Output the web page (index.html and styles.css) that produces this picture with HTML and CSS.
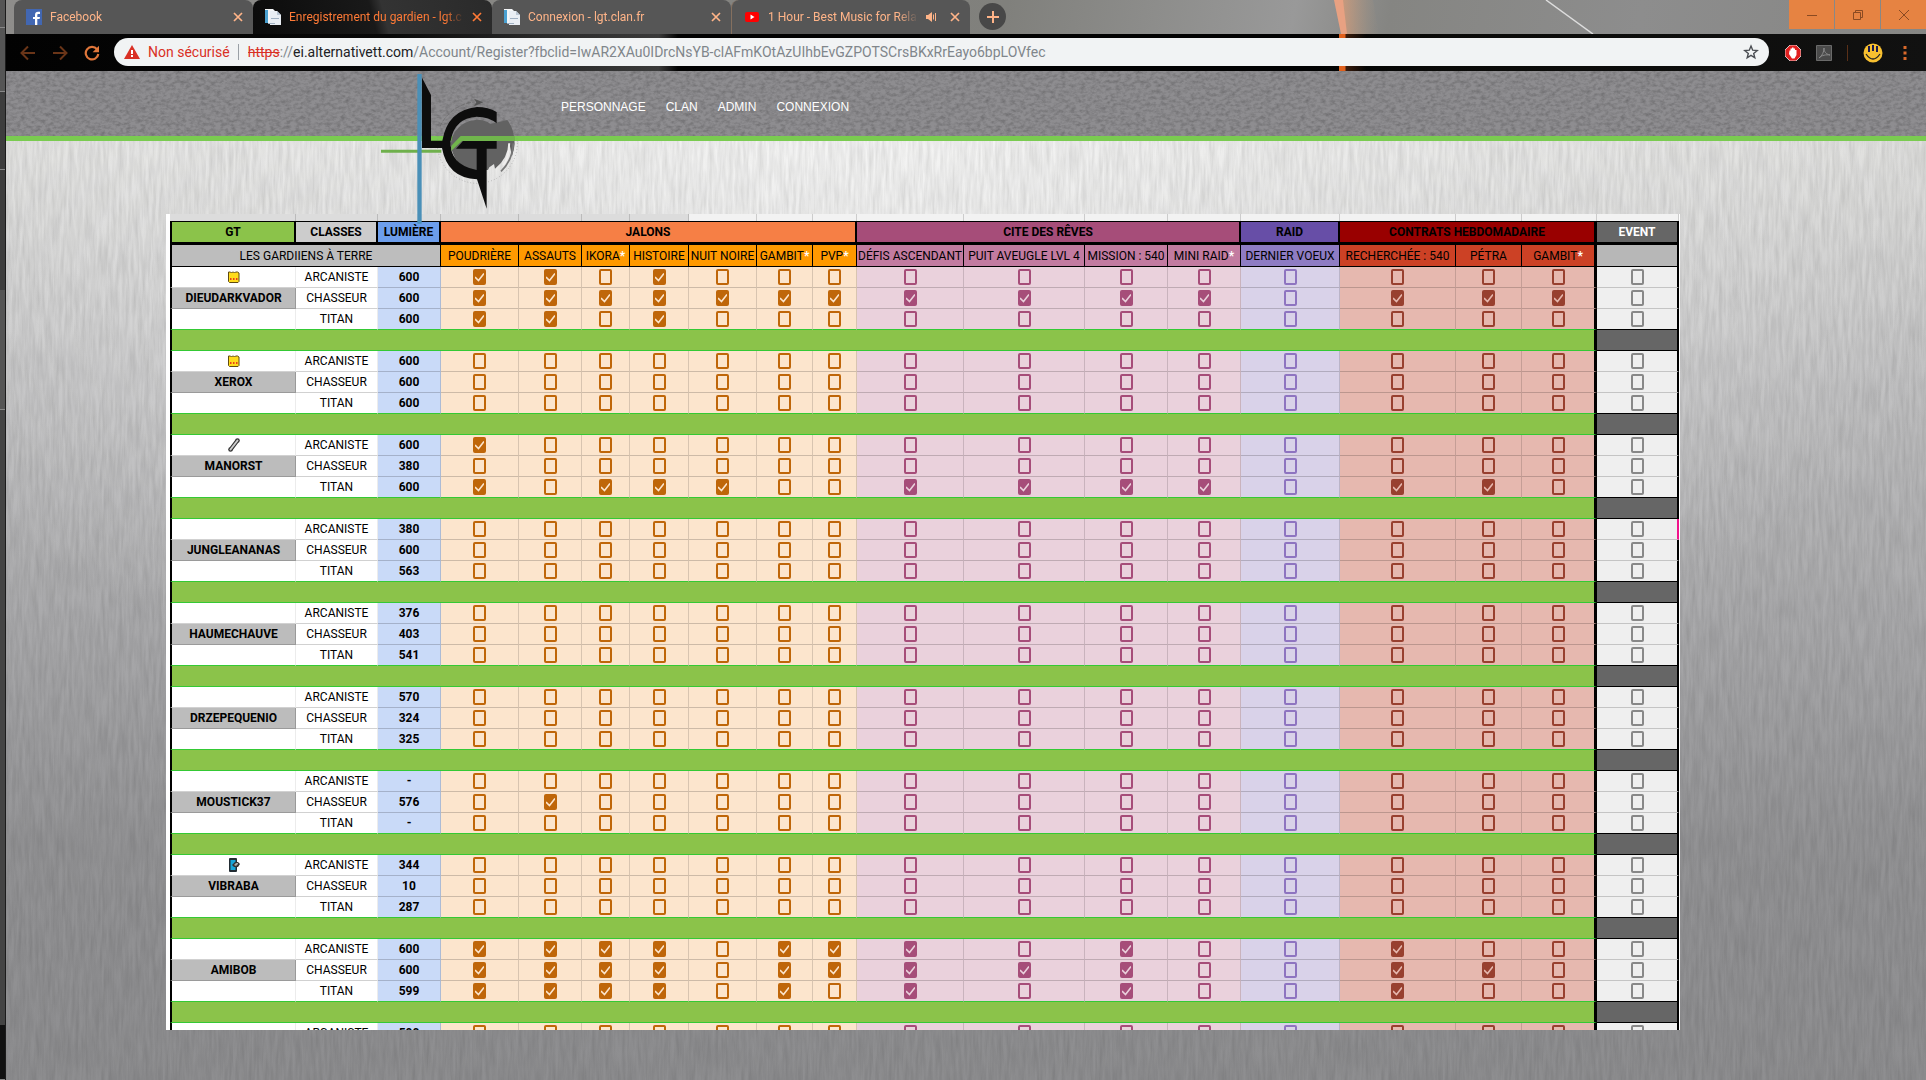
FILE: index.html
```html
<!DOCTYPE html>
<html lang="fr">
<head>
<meta charset="utf-8">
<title>Enregistrement du gardien - lgt.clan.fr</title>
<link rel="stylesheet" href="styles.css">
</head>
<body>
<svg class="defs" aria-hidden="true">
  <symbol id="close" viewBox="0 0 10 10"><path d="M1 1 9 9M9 1 1 9" fill="none" stroke="currentColor" stroke-width="1.7"/></symbol>
  <symbol id="doc" viewBox="0 0 16 16"><path d="M0 0h8l2 2v12H0z" fill="#f4f6f8"/><path d="M0 1h3v13H0z" fill="#4aa0d0"/><path d="M5 2h7l4 4v10H5z" fill="#e9eef4"/><path d="M12 2v4h4z" fill="#b9c6d4"/><path d="M6 9h8v1H6zM3 14h7v1H3z" fill="#9fb0c2"/></symbol>
  <symbol id="bubble" viewBox="0 0 12 12"><path d="M.5 1h2l1 1 1-1h1l1 1 1-1h2l1.500 1v8.500l-1 1H1.500l-1-1z" fill="#ffdc1c" stroke="#5f4a10"/><path d="M2 7h1.500v2H2zM5 7h1.500v2H5zM8 7h1.500v2H8z" fill="#e8401c"/></symbol>
  <symbol id="bone" viewBox="0 0 12 14"><path d="M3 11 9 3" stroke="#333" stroke-width="4" stroke-linecap="round"/><circle cx="9.500" cy="2.500" r="2.300" fill="#333"/><circle cx="2.500" cy="11.500" r="2.300" fill="#333"/><path d="M2.500 11.500 9.500 2.500" stroke="#ccc" stroke-width="2" stroke-linecap="round"/></symbol>
  <symbol id="phone" viewBox="0 0 12 14"><rect x="1" width="8" height="14" rx="1" fill="#222c33"/><path d="M2.500 2h5v10h-5z" fill="#18a5d8"/><path d="M4 7l3-3h3l2 2-2 3H6z" fill="#333"/><path d="M6 7l2-2h2v1L8 8z" fill="#aaa"/></symbol>
</svg>

<div class="behind" aria-hidden="true"><i></i><i></i><i></i><i></i><i></i></div>

<div class="window">
  <header class="tabstrip">
    <nav class="tabs" aria-label="Onglets">
      <div class="tab"><svg class="fav" viewBox="0 0 16 16"><path d="M0 0h16v16H0z" fill="#4267b2"/><path d="M9 16V10H7V8h2V6c0-2.200 1.200-3.200 3-3.200h2V5h-1.500C11.600 5 11.300 5.400 11.300 6.200V8H14l-.4 2h-2.300v6z" fill="#fff"/></svg><span>Facebook</span><button aria-label="Fermer"><svg><use href="#close"/></svg></button></div>
      <div class="tab active"><svg class="fav"><use href="#doc"/></svg><span>Enregistrement du gardien - lgt.c</span><button aria-label="Fermer"><svg><use href="#close"/></svg></button></div>
      <div class="tab"><svg class="fav"><use href="#doc"/></svg><span>Connexion - lgt.clan.fr</span><button aria-label="Fermer"><svg><use href="#close"/></svg></button></div>
      <div class="tab split"><svg class="fav" viewBox="0 0 16 16"><rect x="1" y="3" width="14" height="10" rx="2" fill="#f00"/><path d="M6.500 5.500v5l4-2.500z" fill="#fff"/></svg><span>1 Hour - Best Music for Relax</span><svg class="sound" viewBox="0 0 12 12"><path d="M0 4h2l4-3v10L2 8H0z" fill="currentColor"/><path d="M7.500 3.500v5M9.500 2v8" stroke="currentColor" fill="none"/></svg><button aria-label="Fermer"><svg><use href="#close"/></svg></button></div>
    </nav>
    <button class="newtab" aria-label="Nouvel onglet"><svg viewBox="0 0 12 12"><path d="M6 0v12M0 6h12" stroke="currentColor" stroke-width="2"/></svg></button>
    <svg class="wallpaper" viewBox="0 0 330 34" aria-hidden="true"><defs><linearGradient id="glow"><stop offset="0" stop-color="#f0a070" stop-opacity=".7"/><stop offset="1" stop-color="#b09a80" stop-opacity="0"/></linearGradient></defs><path d="M24 0h35l6 34H32z" fill="url(#glow)"/><path d="M20 0h9l4 34h-6z" fill="#e8a182"/><path d="M232 0l47 34" stroke="#ddd" stroke-width="1.500"/></svg>
    <div class="winbtns">
      <button aria-label="Réduire"><svg viewBox="0 0 12 12"><path d="M1 6.500h10" stroke="currentColor"/></svg></button>
      <button aria-label="Restaurer"><svg viewBox="0 0 12 12"><path d="M1.500 3.500h7v7h-7zM3.500 3V1.500h7v7H9" fill="none" stroke="currentColor"/></svg></button>
      <button aria-label="Fermer la fenêtre"><svg viewBox="0 0 12 12"><path d="M1 1l10 10M11 1 1 11" stroke="currentColor"/></svg></button>
    </div>
  </header>

  <div class="toolbar">
    <button class="dim" aria-label="Précédent"><svg viewBox="0 0 16 16"><path d="M15 8H2M8 1.500 1.500 8 8 14.500" fill="none" stroke="currentColor" stroke-width="2"/></svg></button>
    <button class="dim" aria-label="Suivant"><svg viewBox="0 0 16 16"><path d="M1 8h13M8 1.500 14.500 8 8 14.500" fill="none" stroke="currentColor" stroke-width="2"/></svg></button>
    <button aria-label="Actualiser"><svg viewBox="0 0 16 16"><path d="M13 4.200A6.300 6.300 0 1 0 14.300 9" fill="none" stroke="currentColor" stroke-width="2.200"/><path d="M15 .8v6.400H8.600z" fill="currentColor"/></svg></button>
    <div class="address">
      <svg class="warn" viewBox="0 0 16 14"><path d="M8 0l8 14H0z" fill="#d93025"/><path d="M7 5h2v4H7zM7 10h2v2H7z" fill="#fff"/></svg>
      <span class="unsafe">Non sécurisé</span>
      <span class="url"><s>https</s>://<b>ei.alternativett.com</b>/Account/Register?fbclid=IwAR2XAu0IDrcNsYB-clAFmKOtAzUIhbEvGZPOTSCrsBKxRrEayo6bpLOVfec</span>
      <svg class="star" viewBox="0 0 16 16"><path d="M8 2l1.700 4.200 4.500.3-3.500 2.900 1.100 4.400L8 11.400l-3.800 2.400 1.100-4.400-3.500-2.900 4.500-.3z" fill="none" stroke="#4a4d52" stroke-width="1.400"/></svg>
    </div>
    <div class="exts">
      <svg viewBox="0 0 16 16"><path d="M5 0h6l5 5v6l-5 5H5l-5-5V5z" fill="#e02020" stroke="#eee" stroke-width=".8"/><path d="M4.500 5.500h1V3.500h1.500V2.500h1.500v1H10V5h1.500v5l-2 3.500H7L4 9z" fill="#fff"/></svg>
      <svg viewBox="0 0 16 16"><path d="M.5.500h15v15H.5z" fill="#4a4a4a" stroke="#6a6a6a"/><path d="M3 13c3-2 5-6 5-10 0 4 2 6 6 7-4-.5-8 0-11 3z" fill="none" stroke="#8a8a8a"/></svg>
      <i></i>
      <svg class="smile" viewBox="0 0 20 20"><circle cx="10" cy="10" r="9.500" fill="#f8c030"/><path d="M6 3v6M10 2v6M14 3v6" stroke="#1a1a50" stroke-width="2"/><path d="M3 11q7 10 14 0" fill="none" stroke="#222" stroke-width="1.300"/></svg>
      <svg class="dots" viewBox="0 0 4 16"><path d="M.5 1h3v3h-3zM.5 6.500h3v3h-3zM.5 12h3v3h-3z" fill="#d9692b"/></svg>
    </div>
  </div>

  <div class="banner">
    <svg class="logo" viewBox="60 33 420 465" role="img" aria-label="LGT">
      <circle cx="352" cy="250" r="120" fill="none" stroke="#888" stroke-width="2" stroke-dasharray="2 7"/>
      <path d="M240 200a124 124 0 0 1 105-74" fill="none" stroke="#666" stroke-width="2" stroke-dasharray="14 4"/>
      <path d="M342 116l28 11-28 12 7-12z" fill="#555"/>
      <path d="M272 250a80 80 0 0 1 111-64l8 6 51-12q22 28 22 72-2 20-8 36l-6-28-5-12q0 46-40 78l-3-14-14 10-4 8H340q-62-12-68-80z" fill="#626262"/>
      <path d="M448 250q0 40-18 66" fill="none" stroke="#f0efee" stroke-width="5"/>
      <path d="M460 250q-3 52-37 84" fill="none" stroke="#777" stroke-width="5"/>
      <path d="M186 53l27 52v137h34q16-92 104-101 34 0 59 15v34q-22-19-60-20-66 4-78 72-4 72 78 88V266h-62l21-23h101v23h-30v180l-29-88Q262 354 246 264h-60z" fill="#0d0d0d"/>
      <path d="M63 269h181v9H63z" fill="#6fb04c"/>
      <path d="M464 228H302l-28 29v15l32-29h158z" fill="#70b54c"/>
      <path d="M172 42h13v449h-13z" fill="#4a90b8"/>
    </svg>
    <nav class="menu" aria-label="Menu">
      <a href="#personnage">PERSONNAGE</a><a href="#clan">CLAN</a><a href="#admin">ADMIN</a><a href="#connexion">CONNEXION</a>
    </nav>
  </div>

  <main>
    <div class="sheet">
      <table>
        <colgroup><col style="width:126px"><col style="width:82px"><col style="width:63px"><col style="width:78px"><col style="width:63px"><col style="width:48px"><col style="width:59px"><col style="width:68px"><col style="width:56px"><col style="width:44px"><col style="width:107px"><col style="width:121px"><col style="width:83px"><col style="width:73px"><col style="width:99px"><col style="width:116px"><col style="width:66px"><col style="width:75px"><col style="width:82px"></colgroup>
        <thead>
          <tr class="ruler" aria-hidden="true"><td></td><td></td><td></td><td></td><td></td><td></td><td></td><td></td><td></td><td></td><td></td><td></td><td></td><td></td><td></td><td></td><td></td><td></td><td></td></tr>
          <tr class="groups"><th class="gt">GT</th><th class="cls">CLASSES</th><th class="lum">LUMIÈRE</th><th class="jalons" colspan="7">JALONS</th><th class="cite" colspan="4">CITE DES RÊVES</th><th class="raid">RAID</th><th class="contrats" colspan="3">CONTRATS HEBDOMADAIRE</th><th class="event">EVENT</th></tr>
          <tr class="names"><th class="team" colspan="3">LES GARDIIENS À TERRE</th><th class="jalons">POUDRIÈRE</th><th class="jalons">ASSAUTS</th><th class="jalons">IKORA<b>*</b></th><th class="jalons">HISTOIRE</th><th class="jalons">NUIT NOIRE</th><th class="jalons">GAMBIT<b>*</b></th><th class="jalons">PVP<b>*</b></th><th class="cite">DÉFIS ASCENDANT</th><th class="cite">PUIT AVEUGLE LVL 4</th><th class="cite">MISSION : 540</th><th class="cite">MINI RAID<b>*</b></th><th class="raid">DERNIER VOEUX</th><th class="contrats">RECHERCHÉE : 540</th><th class="contrats">PÉTRA</th><th class="contrats wall">GAMBIT<b>*</b></th><th class="event"></th></tr>
        </thead>
        <tbody id="rows"></tbody>
      </table>
    </div>
  </main>
</div>
<script src="script.js"></script>
</body>
</html>
```
FILE: styles.css
```css
* { box-sizing: border-box; }
body {
  margin: 0;
  height: 100vh;
  display: grid;
  grid-template-columns: 6px 1fr;
  overflow: hidden;
  font-family: "Liberation Sans", Arial, sans-serif;
}
button { border: 0; padding: 0; background: none; color: inherit; display: flex; align-items: center; justify-content: center; }
svg { display: block; }
.defs { position: absolute; width: 0; height: 0; }

/* edge of the window behind the browser */
.behind { background: #444; border-right: 1px solid #1c1c1c; display: grid; grid-template-rows: 28px 64px 78px 240px 1fr; }
.behind i { border-bottom: 1px solid #888; background: #555; }
.behind i:nth-child(3) { background: #3d3d3d; }
.behind i:nth-child(4) { background: linear-gradient(#3d3d3d 50%, #555 50%); }
.behind i:nth-child(5) { background: linear-gradient(#444 92%, #111 92%); }

.window { display: flex; flex-direction: column; min-width: 0; height: 100vh; }

/* tab strip */
.tabstrip {
  height: 34px; flex: none; display: flex; align-items: flex-start; padding-left: 8px;
  background: linear-gradient(100deg, #8e8d8b 0, #80807c 52%, #999 67%, #858582 72%, #8d8d8d 85%, #868684 100%);
  font: 12px/28px Roboto, "Open Sans", sans-serif; color: #ffb488;
}
.tabs { display: flex; height: 34px; }
.tab { width: 239px; height: 34px; padding: 0 10px 0 12px; display: flex; align-items: center; gap: 8px; background: #565656; border-radius: 8px 8px 0 0; }
.tab.active { color: #ff7a36; background: linear-gradient(75deg, #0b0b0b, #191919 50%, #333 55%, #2a2a2a); }
.tab.split { border-left: 1px solid #85705f; }
.tab span { flex: 1; overflow: hidden; white-space: nowrap; mask-image: linear-gradient(90deg, #000 calc(100% - 20px), transparent); }
.tab button, .tab button svg { width: 10px; height: 10px; }
.fav { width: 16px; height: 16px; flex: none; }
.sound { width: 12px; height: 12px; margin-right: 4px; flex: none; }
.newtab { width: 27px; height: 27px; margin: 3px 0 0 9px; border-radius: 50%; background: #484848; flex: none; }
.newtab svg { width: 12px; height: 12px; }
.wallpaper { width: 330px; height: 34px; margin-left: auto; margin-right: 145px; }
.winbtns { display: flex; gap: 1px; color: #8a4a22; }
.winbtns button { width: 45px; height: 29px; background: #e68342; }
.winbtns svg { width: 12px; height: 12px; }

/* toolbar */
.toolbar {
  height: 37px; flex: none; display: flex; align-items: center; padding: 0 19px 0 14px; gap: 16px; color: #e0763a;
  background:
    linear-gradient(90deg, transparent 69px, #e0601c 0, #e0601c 75px, #3a1c0c 76px, transparent 96px) 1264px 0 / 100px 100% no-repeat,
    linear-gradient(90deg, #020202, #080808 20%, #2a2a2a 28%, #3a3a3a 34%, #020202 35%, #020202 68%, #0a0a08 75%, #111 100%);
}
.toolbar > button, .toolbar > button svg { width: 16px; height: 16px; }
.toolbar .dim { color: #6a3518; }
.address { flex: 1; height: 28px; margin-bottom: 1px; margin-left: -2px; padding: 0 10px; border-radius: 14px; background: #f1f3f4; display: flex; align-items: center; font: 14px/28px Roboto, "Open Sans", sans-serif; color: #80868b; white-space: nowrap; min-width: 0; }
.warn { width: 16px; height: 14px; margin-right: 8px; }
.unsafe { color: #d93025; padding-right: 8px; line-height: 16px; border-right: 1px solid #9aa0a6; margin-right: 9px; }
.url { flex: 1; overflow: hidden; }
.url s { color: #d93025; }
.url b { font-weight: 400; color: #202124; }
.star { width: 16px; height: 16px; }
.exts { display: flex; align-items: center; gap: 15px; }
.exts svg { width: 16px; height: 16px; }
.exts i { width: 1px; height: 16px; background: #5a3018; }
.exts .smile { width: 20px; height: 20px; }
.exts .dots { width: 4px; margin-left: 5px; }

/* site banner */
.banner {
  height: 70px; flex: none; position: relative; z-index: 1; padding-left: 555px; display: flex; align-items: center; border-bottom: 5px solid #7acb50;
  background: #8e8d90 url("data:image/svg+xml,%3Csvg xmlns='http://www.w3.org/2000/svg' width='320' height='65'%3E%3Cfilter id='n' x='0' y='0' width='1' height='1'%3E%3CfeTurbulence type='fractalNoise' baseFrequency='.2 .3' numOctaves='3' stitchTiles='stitch'/%3E%3CfeColorMatrix values='0 0 0 0 0 0 0 0 0 0 0 0 0 0 0 .4 0 0 0 -.15'/%3E%3C/filter%3E%3Crect width='320' height='65' filter='url(%23n)'/%3E%3C/svg%3E");
}
.logo { position: absolute; left: 374px; top: 0; width: 140px; height: 155px; }
.menu { display: flex; gap: 20px; margin-top: 6px; font-size: 12px; line-height: 16px; }
.menu a { color: #fff; text-decoration: none; }

/* brushed metal */
main {
  flex: 1; min-height: 0; padding: 73px 246px 50px 160px;
  background:
    url("data:image/svg+xml,%3Csvg xmlns='http://www.w3.org/2000/svg' width='640' height='480'%3E%3Cfilter id='n' x='0' y='0' width='1' height='1'%3E%3CfeTurbulence type='fractalNoise' baseFrequency='.3 .03' numOctaves='3' stitchTiles='stitch'/%3E%3CfeColorMatrix values='0 0 0 0 0 0 0 0 0 0 0 0 0 0 0 .16 0 0 0 -.04'/%3E%3C/filter%3E%3Crect width='640' height='480' filter='url(%23n)'/%3E%3C/svg%3E"),
    radial-gradient(ellipse 1200px 600px at 45% 0, rgba(255,255,255,.7), transparent),
    linear-gradient(#dededc 0, #c0c0c1 25%, #a6a6a8 55%, #939395 75%, #8e8e90 100%);
}
.sheet { height: 100%; overflow: hidden; background: #fff; padding: 0 1px 0 4px; }

table { width: 100%; table-layout: fixed; border-collapse: separate; border-spacing: 0; font: 12px/18px Roboto, "Liberation Sans", sans-serif; color: #000; text-align: center; }
th, td { padding: 0; height: 21px; overflow: hidden; white-space: nowrap; border-right: 1px solid rgba(0,0,0,.14); border-bottom: 1px solid rgba(0,0,0,.18); }
tr > :first-child { border-left: 2px solid #000; }
tr > :last-child { border-right: 2px solid #000; }

.ruler td { height: 7px; background: #f2f2f2; border-bottom: 0; border-left: 0; border-right: 1px solid #ccc; }
.ruler td:nth-child(-n+7) { background: #dcdcdc; border-color: #bbb; }
.groups th { height: 24px; border-top: 1px solid #000; border-bottom: 3px solid #000; border-right: 2px solid #000; }
.names th { height: 22px; font-weight: 400; border-right: 1px solid #000; border-bottom: 1px solid #000; }
.names b { color: #fff; }

.gt { background: #8bc34a; }
.cls { background: #ccc; }
.lum { background: #6d9eeb; }
.groups .jalons { background: #f67f45; }
.groups .cite { background: #a64d79; }
.groups .raid { background: #674ea7; }
.groups .contrats { background: #900; border-right-width: 3px; }
.groups .event { background: #666; color: #fff; }
.names .team { background: #bdbdbd; }
.names .jalons { background: #ff9900; }
.names .cite { background: #c27ba0; }
.names .raid { background: #8e7cc3; }
.names .contrats { background: #cc4125; }
.names .event { background: #b7b7b7; border-right-width: 2px; }

tbody .cell { background: var(--cell); }
tbody .jalons { --cell: #fce5cd; --ink: #bf6609; }
tbody .cite { --cell: #ead1dc; --ink: #a64d79; }
tbody .raid { --cell: #d9d2e9; --ink: #8e74c0; }
tbody .contrats { --cell: #e6b8af; --ink: #98402f; }
tbody .event { --cell: #efefef; --ink: #888; }
tr .wall.wall { border-right: 3px solid #000; }
tbody .who, tbody .class { background: #fff; border-right-color: #ececec; }
tbody .name { background: #bcbcbc; font-weight: 700; border-right-color: #999; }
tbody .light { background: #c9daf8; font-weight: 700; }
tbody .last td { border-bottom-color: #34c934; }
tbody .last .event { border-bottom-color: #000; }
tbody .bar { background: #8bc34a; border-bottom-color: #34c934; }
tbody .plug { background: #666; border-bottom-color: #000; }
.who svg { width: 12px; height: 14px; margin: 0 auto; }
tbody .mark { border-right: 2px solid #f0148c; }

input { appearance: none; display: block; width: 13px; height: 16px; margin: 0 auto; border: 2px solid var(--ink); border-radius: 2px; }
input:checked { background: var(--ink); }
input:checked::after {
  content: ""; display: block; width: 9px; height: 12px; background: var(--cell);
  mask: url("data:image/svg+xml,%3Csvg xmlns='http://www.w3.org/2000/svg' viewBox='0 0 9 12'%3E%3Cpath d='M0 6 3.500 9.500 9 2.500' fill='none' stroke='%23000' stroke-width='1.600'/%3E%3C/svg%3E");
}
```
FILE: script.js
```js
const groups = [["jalons", 7], ["cite", 4], ["raid", 1], ["contrats", 3], ["event", 1]];
const columns = groups.flatMap(([name, count]) => Array(count).fill(name));
const classes = ["ARCANISTE", "CHASSEUR", "TITAN"];
const none = "0".repeat(16);
const players = [
  { name: "DIEUDARKVADOR", icon: "bubble", light: [600, 600, 600], done: ["1101000000000000", "1111111111101110", "1101000000000000"] },
  { name: "XEROX", icon: "bubble", light: [600, 600, 600] },
  { name: "MANORST", icon: "bone", light: [600, 380, 600], done: ["1000000000000000", none, "1011100111101100"] },
  { name: "JUNGLEANANAS", light: [380, 600, 563], mark: true },
  { name: "HAUMECHAUVE", light: [376, 403, 541] },
  { name: "DRZEPEQUENIO", light: [570, 324, 325] },
  { name: "MOUSTICK37", light: ["-", 576, "-"], done: [none, "0100000000000000", none] },
  { name: "VIBRABA", icon: "phone", light: [344, 10, 287] },
  { name: "AMIBOB", light: [600, 600, 599], done: ["1111011101001000", "1111011111001100", "1111010101001000"] },
  { name: "", light: [590, 590, 590] },
];

const html = players.map((p) => {
  const rows = classes.map((cls, r) => {
    const who = r === 1 && p.name
      ? `<td class="name">${p.name}</td>`
      : `<td class="who">${r === 0 && p.icon ? `<svg aria-hidden="true"><use href="#${p.icon}"/></svg>` : ""}</td>`;
    const done = p.done ? p.done[r] : none;
    const cells = columns.map((group, c) => {
      const extra = (c === 14 ? " wall" : "") + (c === 15 && r === 0 && p.mark ? " mark" : "");
      return `<td class="cell ${group}${extra}"><input type="checkbox" aria-label="${p.name} ${cls} ${c + 1}"${done[c] === "1" ? " checked" : ""}></td>`;
    }).join("");
    return `<tr${r === 2 ? ' class="last"' : ""}>${who}<td class="class">${cls}</td><td class="light">${p.light[r]}</td>${cells}</tr>`;
  }).join("");
  return rows + '<tr><td class="bar wall" colspan="18"></td><td class="plug"></td></tr>';
}).join("");
document.getElementById("rows").innerHTML = html;
```
